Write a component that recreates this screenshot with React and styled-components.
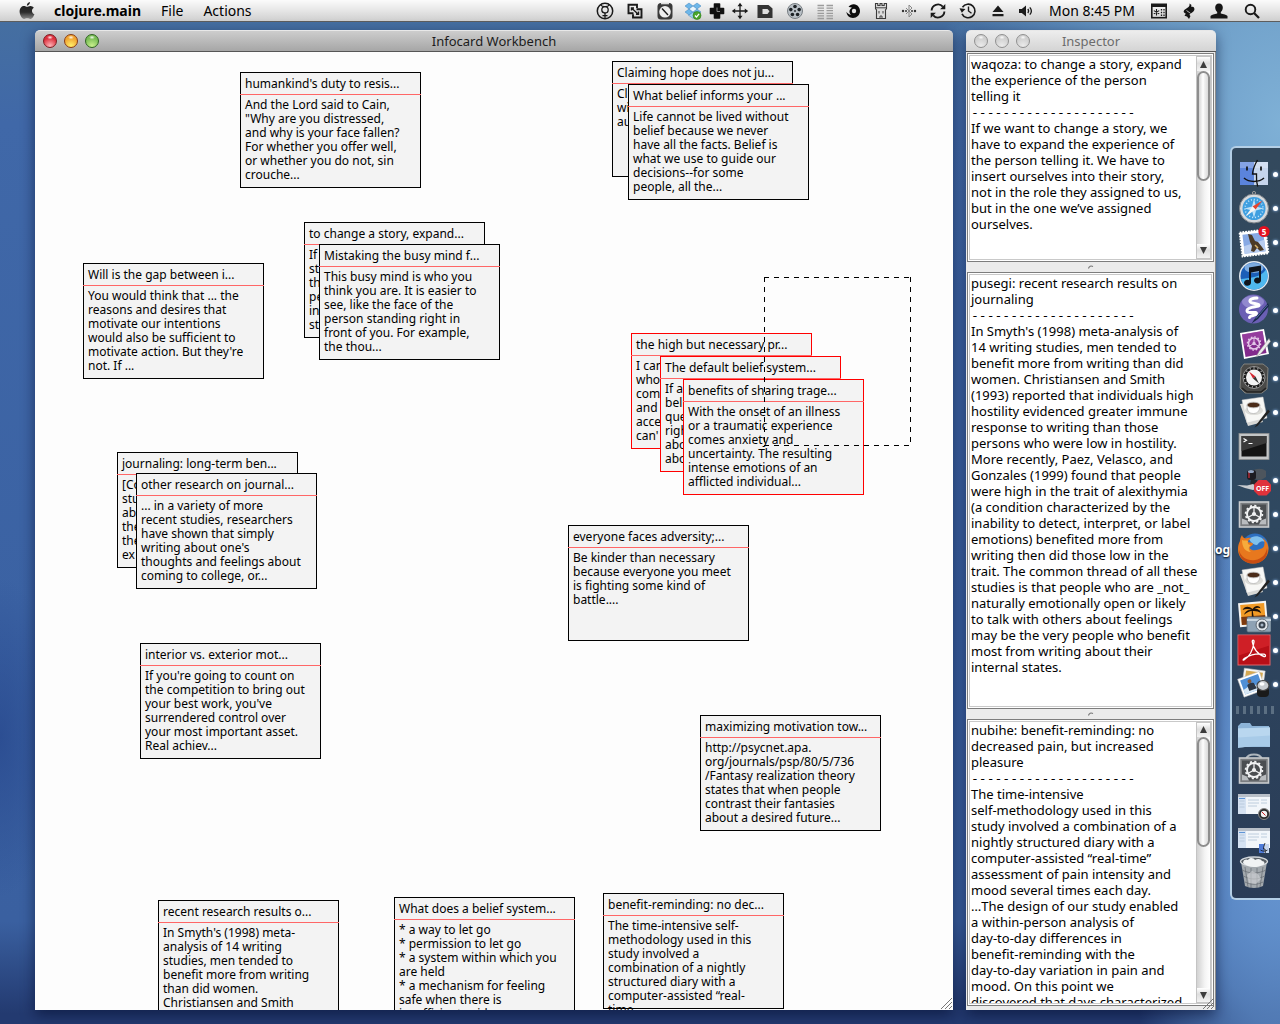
import React from "react";
import styled, { createGlobalStyle, css } from "styled-components";

const UI_FONT = '"Noto Sans", "Open Sans", "DejaVu Sans", sans-serif';

const GlobalStyle = createGlobalStyle`
  * { box-sizing: border-box; }
  body { margin: 0; font-family: ${UI_FONT}; color: #000; overflow: hidden; }
  button { font: inherit; color: inherit; margin: 0; padding: 0; border: 0; background: none; }
`;

/* ---------- shell ---------- */

const Screen = styled.div`
  display: flex;
  flex-direction: column;
  height: 100vh;
  background:
    radial-gradient(ellipse 340px 520px at 100% 12%, rgba(130, 180, 216, 0.95), rgba(110, 160, 205, 0.6) 60%, transparent),
    radial-gradient(ellipse 160px 460px at 100% 78%, rgba(108, 156, 214, 1), rgba(100, 148, 208, 0.7) 50%, transparent),
    radial-gradient(ellipse 60px 160px at 0 72%, rgba(38, 70, 140, 0.7), transparent),
    linear-gradient(to bottom, #46709f 0, #4068a8 12%, #3b62a3 60%, #3a60a0 90%, #233a70 99%);
`;

const Desktop = styled.main`
  flex: 1;
  min-height: 0;
  display: flex;
  padding: 8px 0 14px 35px;
`;

/* ---------- menu bar ---------- */

const MenuBar = styled.header`
  display: flex;
  align-items: center;
  height: 22px;
  padding: 0 10px 0 19px;
  background: linear-gradient(#fbfbfb, #e6e6e6 50%, #cfcfcf);
  border-bottom: 1px solid #5d5d5d;
  font-size: 14px;
  line-height: 20px;
`;

const Menus = styled.nav`
  display: flex;
  align-items: center;
`;

const MenuList = styled.div`
  display: flex;
  padding-left: 9px;
`;

const MenuButton = styled.button`
  padding: 0 10px;
  font-weight: ${(p) => (p.$bold ? 700 : 400)};
`;

const StatusItems = styled.div`
  display: flex;
  align-items: center;
  margin-left: auto;
`;

const StatusButton = styled.button`
  display: flex;
  justify-content: center;
  align-items: center;
  width: ${(p) => p.$w}px;
  height: 20px;
`;

/* ---------- windows ---------- */

const Window = styled.section`
  display: flex;
  flex-direction: column;
  border-radius: 5px 5px 0 0;
  box-shadow: 0 5px 14px rgba(0, 10, 40, 0.55);
  ${(p) =>
    p.$fill
      ? css`flex: 1; min-width: 0;`
      : css`flex: none; width: 250px; margin-left: 13px;`}
`;

const TitleBar = styled.header`
  display: grid;
  grid-template-columns: 80px 1fr 80px;
  align-items: center;
  flex: none;
  height: 22px;
  border-radius: 5px 5px 0 0;
  border-top: 1px solid #e8e8e8;
  border-bottom: 1px solid #565656;
  background: ${(p) => (p.$active ? "linear-gradient(#cdcdcd, #a6a6a6)" : "linear-gradient(#ededed, #d4d4d4)")};
  color: ${(p) => (p.$active ? "#1c1c1c" : "#6c6c6c")};
`;

const Title = styled.h1`
  margin: 0;
  text-align: center;
  font-size: 13px;
  line-height: 20px;
  font-weight: 400;
  white-space: nowrap;
`;

const Lights = styled.div`
  display: flex;
  gap: 7px;
  padding-left: 8px;
`;

const lightColors = {
  red: ["#ffb3b8", "#dc2f3c", "#7c1d22"],
  amber: ["#fff06a", "#f0a431", "#8a3c14"],
  green: ["#c9f08d", "#79bd55", "#2f6422"],
  off: ["#ebebeb", "#cfcfcf", "#909090"],
};

const Light = styled.button`
  width: 14px;
  height: 14px;
  border-radius: 50%;
  border: 1px solid ${(p) => lightColors[p.$tone][2]};
  background:
    radial-gradient(ellipse 3px 2px at 50% 20%, rgba(255, 255, 255, 0.9), transparent),
    radial-gradient(circle at 50% 90%, ${(p) => lightColors[p.$tone][0]}, ${(p) => lightColors[p.$tone][1]} 65%);
`;

const Canvas = styled.div`
  position: relative;
  flex: 1;
  min-height: 0;
  overflow: hidden;
  background: #fdfdfd;
`;

const Card = styled.article`
  position: absolute;
  left: ${(p) => p.$x}px;
  top: ${(p) => p.$y}px;
  width: 181px;
  height: 116px;
  border: 1px solid ${(p) => (p.$selected ? "#f00" : "#000")};
  background: #f3f3f3;
  font-size: 12px;
`;

const CardTitle = styled.h2`
  margin: 0;
  padding: 0 4px;
  font-size: 12px;
  line-height: 21px;
  font-weight: 400;
  white-space: nowrap;
`;

const CardRule = styled.hr`
  height: 1px;
  margin: 0 -1px;
  border: 0;
  background: #ff6666;
`;

const CardBody = styled.p`
  margin: 0;
  padding: 3px 4px;
  line-height: 14px;
  white-space: pre;
`;

const dash = (dir) => `repeating-linear-gradient(to ${dir}, #000 0 5px, transparent 5px 10px)`;

const Marquee = styled.div`
  position: absolute;
  left: 729px;
  top: 225px;
  width: 147px;
  height: 169px;
  background:
    ${dash("right")} top / 100% 1px no-repeat,
    ${dash("right")} bottom / 100% 1px no-repeat,
    ${dash("bottom")} left / 1px 100% no-repeat,
    ${dash("bottom")} right / 1px 100% no-repeat;
`;

const Grip = styled.svg`
  position: absolute;
  right: 1px;
  bottom: 1px;
`;

/* ---------- inspector ---------- */

const Panes = styled.div`
  position: relative;
  flex: 1;
  min-height: 0;
  display: flex;
  flex-direction: column;
  padding: 1px 1px 4px;
  background: #ebebeb;
  border-right: 1px solid #8c8c8c;
`;

const Pane = styled.div`
  flex: ${(p) => p.$grow} 1 0;
  min-height: 0;
  display: flex;
  border: 1px solid #7d7d7d;
  outline: 1px solid #c9c9c9;
  outline-offset: -3px;
  background: #fff;
`;

const PaneText = styled.div`
  flex: 1;
  min-width: 0;
  overflow: hidden;
  margin: 2px 0;
  padding: 0 3px;
  font-size: 13px;
  line-height: 16px;
  white-space: pre;
`;

const Separator = styled.span`
  font-family: "DejaVu Sans Mono", monospace;
  line-height: 14px;
`;

const Splitter = styled.div`
  flex: none;
  display: flex;
  align-items: center;
  justify-content: center;
  height: 10px;
`;

const ScrollBar = styled.div`
  flex: none;
  display: flex;
  flex-direction: column;
  width: 15px;
  margin: 2px;
  border: 1px solid #c4c4c4;
  background: linear-gradient(to right, #d2d2d2, #f4f4f4 60%, #fff);
`;

const ScrollButton = styled.button`
  display: flex;
  align-items: center;
  justify-content: center;
  flex: none;
  height: 14px;
  background: linear-gradient(#fff, #dedede 45%, #f3f3f3);
`;

const Track = styled.div`
  flex: 1;
  min-height: 0;
`;

const Thumb = styled.div`
  width: 13px;
  height: 110px;
  border: 2px solid #8e8e8e;
  border-radius: 7px;
  background: linear-gradient(to right, #d5d5d5, #fff 45%, #f1f1f1 60%, #dadada);
`;

/* ---------- dock ---------- */

const Margin = styled.div`
  position: relative;
  flex: none;
  width: 14px;
`;

const DesktopLabel = styled.span`
  position: absolute;
  right: 0;
  top: 512px;
  font-size: 12px;
  line-height: 16px;
  font-weight: 700;
  color: #fff;
  text-shadow: 0 1px 2px #000;
`;

const Dock = styled.aside`
  flex: none;
  align-self: center;
  display: flex;
  flex-direction: column;
  width: 50px;
  margin-top: 6px;
  padding: 9px 0;
  border: 2px solid #b4cfe6;
  border-right: 0;
  border-radius: 6px 0 0 6px;
  background: linear-gradient(#33495d, #2f4860 50%, #2a3c57);
`;

const DockButton = styled.button`
  display: flex;
  align-items: center;
  gap: 2px;
  height: 34px;
  padding-left: 5px;
`;

const RunningDot = styled.span`
  width: 5px;
  height: 5px;
  border-radius: 50%;
  background: #fff;
  box-shadow: 0 0 3px #9cc8ff;
`;

const DockSeparator = styled.div`
  flex: none;
  height: 18px;
  display: flex;
  align-items: center;
  gap: 4px;
  padding-left: 4px;
`;

const Tick = styled.span`
  width: 3px;
  height: 8px;
  background: #5b6f82;
`;

/* ---------- status icons, 20x20 ---------- */

const S = ({ children }) => (
  <svg width="20" height="20" viewBox="0 0 20 20" fill="none" stroke="#1a1a1a" strokeWidth="1.6" aria-hidden="true">
    {children}
  </svg>
);

const statusIcons = [
  ["Mercury", 30, <S><circle cx="10" cy="10" r="7.700" strokeWidth="1.500" /><circle cx="10" cy="8.800" r="3.200" strokeWidth="1.300" /><path d="M5.800 4c.8 1.300 2.300 1.600 4.200 1.600S13.400 5.300 14.200 4M10 12v5.500M7.500 14.600h5" strokeWidth="1.300" /></S>],
  ["Windows", 30, <S><path d="M8.500 12.200h-5V3.800h8.500v3.200" strokeWidth="1.900" /><path d="M11.500 8.200h5v8.300H8v-3.300" strokeWidth="1.900" /><path d="M6.500 9.500V7h2.500M7 7.500l6 5.500M13.500 10.500V13.300H11" strokeWidth="1.400" /></S>],
  ["Timer", 30, <S><rect x="2.500" y="2" width="15" height="16.500" rx="3.500" fill="#3a3a3a" stroke="none" /><circle cx="10" cy="10.800" r="5.800" fill="#eee" stroke="none" /><path d="M7 7.600l6 6.400" strokeWidth="1.400" /><path d="M6 2.500h8" stroke="#ddd" /></S>],
  ["Dropbox", 25, <S><g stroke="#3d82bd" strokeWidth=".5" fill="#6db7ea"><path d="M6 2l4 3-4 3-4-3zM14 2l4 3-4 3-4-3zM6 8l4 3-4 3-4-3zM14 8l4 3-4 3-4-3z" /><path d="M10 5l4 3-4 3-4-3z" fill="#e8f5fd" /><path d="M5.500 14.300l4.500-3 4.500 3-4.500 3z" fill="#9dd2f3" /></g><circle cx="14" cy="14.500" r="4" fill="#4aa52c" stroke="#2e7d18" strokeWidth=".6" /><path d="M12 14.500l1.500 1.600 2.600-3.200" stroke="#fff" strokeWidth="1.300" /></S>],
  ["Caffeine", 24, <S><path d="M7.500 3h5v4.500h4v5h-4V17h-5v-4.500h-4v-5h4z" fill="#111" stroke="#111" strokeLinejoin="round" /><path d="M10 6.500v4h3" stroke="#888" strokeWidth="1" /></S>],
  ["Spaces", 22, <S><path d="M10 3v14M3 10h14" strokeWidth="1.300" /><path d="M10 1.800l2.500 3.400h-5zM10 18.200l2.500-3.400h-5zM1.800 10l3.400-2.500v5zM18.200 10l-3.400-2.500v5z" fill="#1a1a1a" stroke="none" /></S>],
  ["DEVONthink", 28, <S><path d="M2.500 4h11l4 3.500V17h-15z" fill="#333" stroke="none" /><path d="M7.500 8h5l2 2.300-2 2.700h-5z" fill="#ddd" stroke="none" /></S>],
  ["Film", 31, <S><circle cx="10" cy="10" r="7.500" fill="#b9c0c6" stroke="#777d82" strokeWidth="1" /><g fill="#1d2226" stroke="none"><circle cx="10" cy="5.500" r="1.800" /><circle cx="14.200" cy="8.600" r="1.800" /><circle cx="12.600" cy="13.500" r="1.800" /><circle cx="7.400" cy="13.500" r="1.800" /><circle cx="5.800" cy="8.600" r="1.800" /><circle cx="10" cy="10" r=".9" /></g></S>],
  ["Monitor", 29, <S><path d="M2.500 4.500h6.500M2.500 7.100h6.500M2.500 9.700h6.500M2.500 12.300h6.500M2.500 14.900h6.500M2.500 17.500h6.500M11.500 4.500H18M11.500 7.100H18M11.500 9.700H18M11.500 12.300H18M11.500 14.900H18M11.500 17.500H18" stroke="#9c9c9c" strokeWidth="1.300" /></S>],
  ["Swirl", 27, <S><path d="M5.500 6C7 3.800 9 3 11 3.200c3.500.3 6 3.300 6 6.800 0 4-3.200 7-7 7-3.600 0-6.500-2.600-6.500-6.200 1 1.700 2.500 2.900 4.500 3-1.500-1.200-2-3-1.200-4.700C7.600 7.500 9 6.800 9 6.800 7.800 6.200 6.600 5.900 5.500 6z" fill="#0c0c0c" stroke="none" /><circle cx="11" cy="10" r="2.200" fill="#e4e4e4" stroke="none" /></S>],
  ["Rook", 29, <S><path d="M5.500 17.500V9L4.500 7.500v-5h2.300V4.500h2.200v-2h2v2h2.200v-2h2.300v5L14.500 9v8.500z" fill="#dcdcdc" stroke="#3a3a3a" strokeWidth="1.100" /><path d="M4.500 6.800h11M8 10v2.500M12 10v2.500M9 17.500v-2.500h2v2.500" stroke="#444" strokeWidth="1" /></S>],
  ["Bluetooth", 28, <S><g stroke="#888" strokeWidth="1"><path d="M7 7l6 6-3 3V4l3 3-6 6" /></g><g fill="#333" stroke="none"><circle cx="4" cy="10" r="1.200" /><circle cx="7" cy="10" r="1" /><circle cx="13" cy="10" r="1" /><circle cx="16" cy="10" r="1.200" /></g></S>],
  ["Sync", 29, <S><path d="M3.600 9.500A6.400 6.400 0 0 1 14.800 5.600M16.400 10.500A6.400 6.400 0 0 1 5.200 14.400" strokeWidth="1.900" /><path d="M17.300 3v5.200h-5.200zM2.700 17v-5.200h5.200z" fill="#1a1a1a" stroke="none" /></S>],
  ["Time Machine", 31, <S><path d="M4.500 6.200A6.800 6.800 0 1 1 4 12.800" strokeWidth="1.600" /><path d="M1.500 7.200l6 .8-3.700 3.800z" fill="#1a1a1a" stroke="none" /><path d="M10.500 5.500V10l3 2.200" strokeWidth="1.400" /></S>],
  ["Eject", 29, <S><path d="M10 4.500l5.500 6.500h-11zM4.500 13h11v2.300h-11z" fill="#1a1a1a" stroke="none" /></S>],
  ["Volume", 28, <S><path d="M3 8h2.800L10 4.500v11L5.800 12H3z" fill="#1a1a1a" stroke="none" /><path d="M11.800 8c1 1.200 1 2.800 0 4M13.800 6.300c1.900 2.200 1.900 5.200 0 7.400" strokeWidth="1.300" /></S>],
];

const sessionIcons = [
  ["Input menu", 30, <S><rect x="2.800" y="3.300" width="14.400" height="13.400" strokeWidth="1.600" /><path d="M2.800 5h14.400" strokeWidth="2" /><path d="M7.500 8v6.500M4.800 9.600l5.400 3.200M10.200 9.600l-5.400 3.200" strokeWidth="1.100" /><path d="M12.500 8v7M15 8v7" strokeDasharray="1.500 1.200" strokeWidth="1.300" /></S>],
  ["Scripts", 30, <S><path d="M10.500 2.500l2 1.500-.5 1.500 2.500.5c1.800 2 .8 4-1 5.200l-2.500 1.800c-.8.700-.3 1.500.5 2l-1.500 3-2-2.500-2.500-.8 1.300-2L5 11.500c-.8-1 0-2.300 1-3L9.500 6c1-.8 1.200-1.800 1-3.500z" fill="#151515" stroke="none" /><path d="M7.500 9.500l4 2.800" stroke="#ddd" strokeWidth=".8" /></S>],
  ["User", 30, <S><path d="M10 2.500c2.600 0 3.800 1.800 3.800 4 0 2-1 3.600-2 4.500v1.500c2.500.8 6 1.200 6.700 2.500v2.500h-17V15c.7-1.300 4.200-1.700 6.700-2.500V11c-1-.9-2-2.500-2-4.500 0-2.200 1.200-4 3.800-4z" fill="#151515" stroke="none" /></S>],
  ["Spotlight", 36, <S><circle cx="8.500" cy="8.500" r="4.800" strokeWidth="1.900" /><path d="M12 12l5 5" strokeWidth="2.300" /></S>],
];

const AppleLogo = () => (
  <svg width="16" height="18" viewBox="0 0 16 18" aria-hidden="true">
    <defs>
      <linearGradient id="apple" x1="0" y1="0" x2="0" y2="1">
        <stop offset="0" stopColor="#1c1c1c" />
        <stop offset=".6" stopColor="#2c2c2c" />
        <stop offset="1" stopColor="#8c8c8c" />
      </linearGradient>
    </defs>
    <path fill="url(#apple)" d="M10.900 0c.2 1.500-1 3.500-3 3.700C7.600 2.100 9.300.3 10.900 0zM8 4.800c.9 0 1.800-.9 3.400-.9 1.400 0 2.700.7 3.400 1.800-2.700 1.700-2.300 5.300.6 6.500-.7 2-2.300 4.800-4 4.800-1.200 0-1.700-.7-3.200-.7s-2 .7-3.100.7C3 17 .6 12.900.6 9.500c0-3.500 2.200-5.500 4.400-5.500 1.400 0 2.300.8 3 .8z" />
  </svg>
);

/* ---------- dock icons, 34x34 ---------- */

const D = ({ children }) => (
  <svg width="34" height="34" viewBox="0 0 34 34" aria-hidden="true">
    {children}
  </svg>
);

const Gear = ({ cx, cy, r, fill }) => (
  <g transform={`translate(${cx} ${cy})`} fill="none">
    <circle r={r} stroke={fill} strokeWidth={r * 0.28} />
    <circle r={r * 1.2} stroke={fill} strokeWidth={r * 0.24} strokeDasharray={`${r * 0.3} ${r * 0.328}`} />
    <circle r={r * 0.3} fill={fill} />
    <path d={`M0 0V${-r}M0 0L${r * 0.87} ${r * 0.5}M0 0L${-r * 0.87} ${r * 0.5}`} stroke={fill} strokeWidth={r * 0.18} />
  </g>
);

const Prefs = () => (
  <>
    <rect x="2.500" y="5" width="29" height="25" fill="#7a7d80" stroke="#c9cbcd" strokeWidth="1.600" />
    <rect x="5" y="7.500" width="24" height="20" fill="#4b4e51" />
    <path d="M5 27.500v-6l5 2 2 4zM29 27.500v-6l-5 2-2 4z" fill="#b9bcbf" />
    <Gear cx={17} cy={17} r={7} fill="#f2f3f4" />
  </>
);

const Coffee = () => (
  <>
    <path d="M3 9l15-2 8 20-15 4z" fill="#d9d9d6" />
    <path d="M5 5l21-3 4 21-20 5z" fill="#f7f7f5" stroke="#ccc" strokeWidth=".5" />
    <ellipse cx="17" cy="15.500" rx="9" ry="4.500" fill="#dcdcd8" />
    <path d="M10 10c0 6 2 8.500 6.500 8.500S23 15 23 10z" fill="#fff" stroke="#aaa" strokeWidth=".6" />
    <ellipse cx="16.500" cy="10" rx="6.500" ry="2.800" fill="#4a2b18" stroke="#bbb" strokeWidth=".8" />
    <path d="M31 14.500L19.500 29.500l-2 3 3.200-1.700L33 16.500z" fill="#222" />
  </>
);

const WindowThumb = () => (
  <>
    <rect x="1" y="7" width="32" height="20" fill="#f2f6fa" />
    <path d="M1 8.500h32" stroke="#b8bfc8" strokeWidth="3" />
    <rect x="1" y="10" width="8" height="17" fill="#d5e2f2" />
    <path d="M2.500 14h5M2.500 17h5M2.500 20h5M11 13h11M11 16h11M11 19h9M24 13h6M24 16h6" stroke="#b7c8da" strokeWidth=".9" />
    <path d="M2 11.500h6" stroke="#5f95d6" strokeWidth="1" />
  </>
);

const dockApps = [
  ["Finder", true, (
    <D>
      <rect x="3" y="5" width="14" height="23" fill="#5b84dc" /><rect x="17" y="5" width="14" height="23" fill="#c6d5ec" />
      <rect x="3" y="5" width="28" height="6" fill="#fff" opacity=".25" />
      <path d="M20.500 3c-3 5-4.500 9-5 14h4c-.3 5 0 8.500 1.200 12.500" fill="none" stroke="#111" strokeWidth="1.300" />
      <path d="M7 21c5 4.500 15 4.500 20 0" fill="none" stroke="#111" strokeWidth="1.500" />
      <path d="M10 9.500v4M24 9.500v4" stroke="#111" strokeWidth="1.700" />
    </D>
  )],
  ["Safari", true, (
    <D>
      <circle cx="17" cy="17.500" r="14.500" fill="#d7dadd" /><circle cx="17" cy="17.500" r="14.500" fill="none" stroke="#7d8287" strokeWidth="1" />
      <circle cx="17" cy="17.500" r="11.500" fill="#3f9fe0" /><circle cx="17" cy="17.500" r="9" fill="none" stroke="#c5e6fb" strokeWidth="1.500" strokeDasharray="1 2" />
      <path d="M17 8l2 7.500 7.500 2-7.500 2L17 27l-2-7.500-7.500-2 7.500-2z" fill="#bfe2f8" />
      <path d="M25.500 9.500l-7 9-3-3z" fill="#e8442c" /><path d="M8.500 25.500l7-10 3 3z" fill="#f5f5f5" />
      <circle cx="17" cy="2" r="1.600" fill="none" stroke="#999" />
    </D>
  )],
  ["Mail", true, (
    <D>
      <g transform="rotate(-7 17 18)"><rect x="4" y="6" width="26" height="24" fill="#fff" stroke="#fff" strokeWidth="2" strokeDasharray="1.800 1" />
        <rect x="6.500" y="8.500" width="21" height="19" fill="#87a9e4" /><path d="M6.500 20l21-4v11.500h-21z" fill="#b8cdf0" /></g>
      <path d="M11 9l4 1 3 6 3 1 4 5 2 3-4 1-3-3-3 4-3-1 1-5-2-4z" fill="#4b3a26" /><path d="M18 20l3 3" stroke="#d9b36a" strokeWidth="1.500" />
      <circle cx="27" cy="6.500" r="5.600" fill="#e3101f" />
      <text x="27" y="9.500" fontSize="8" fontWeight="700" textAnchor="middle" fill="#fff" fontFamily="Noto Sans, sans-serif">5</text>
    </D>
  )],
  ["iTunes", false, (
    <D>
      <circle cx="17" cy="17" r="15" fill="#e2e8ee" /><circle cx="17" cy="17" r="13.500" fill="#1b5fb8" />
      <path d="M17 30.500a13.500 13.500 0 0 0 12-20C24 19 11 19 4 20c1.500 6.500 7 10.500 13 10.500z" fill="#4fb8ef" />
      <ellipse cx="17" cy="9" rx="9.500" ry="5" fill="#a7cdf2" opacity=".7" />
      <path d="M12 8.500l12-2v15a3.500 3 0 1 1-2-2.700V12l-8 1.500v10.300a3.500 3 0 1 1-2-2.700z" fill="#10151c" />
    </D>
  )],
  ["Emacs", true, (
    <D>
      <circle cx="16.500" cy="16" r="14.500" fill="#6a5fb4" /><ellipse cx="16" cy="9" rx="11" ry="6.500" fill="#a39bd8" opacity=".7" />
      <path d="M20 5c-4 0-7.500 1-7 3.500S21 10 22 12s-12 1.500-12 5.500 10 .5 9.500 3S13 22 12.500 24.500" fill="none" stroke="#fff" strokeWidth="3" strokeLinecap="round" />
      <path d="M31 10L19 24l-4.500 6.500L21 26 32 13z" fill="#18284a" /><path d="M30.500 12L19 25.500" stroke="#5f82b8" strokeWidth=".8" />
    </D>
  )],
  ["Omni", true, (
    <D>
      <path d="M3 6l24-4 5 25-25 5z" fill="#fff" /><path d="M5 7.500l20.500-3.500 4 22-21 4z" fill="#822a8c" />
      <path d="M5 7.500l20.500-3.500 1.600 9-20 6z" fill="#a04aa8" opacity=".6" />
      <Gear cx={17} cy={16.500} r={5.500} fill="#e3c6e8" /><path d="M32 11.500l-10 13-3 5.500 5-3.500 9.500-12z" fill="#ececec" stroke="#888" strokeWidth=".5" />
    </D>
  )],
  ["Compass", true, (
    <D>
      <path d="M7 3h19l5 4-1 21-5 4H8l-5-5 1-20z" fill="#4a4a48" stroke="#82827e" strokeWidth="1" />
      <circle cx="17" cy="16.500" r="11" fill="#1b1b1b" stroke="#999" strokeWidth="1" /><circle cx="17" cy="16.500" r="8" fill="#f4f4f4" />
      <circle cx="17" cy="16.500" r="9.500" fill="none" stroke="#ddd" strokeWidth="1.300" strokeDasharray="1 3" />
      <path d="M12 10.500l6.500 5-2.500 2z" fill="#d3252f" /><path d="M22 22.500l-6-5 2.500-2z" fill="#333" /><path d="M5 27l5 4h14l5-4" fill="none" stroke="#222" strokeWidth="1.500" />
    </D>
  )],
  ["Bean", true, <D><Coffee /></D>],
  ["Terminal", false, (
    <D>
      <rect x="2" y="4.500" width="30" height="26" fill="#c3c5c6" stroke="#8d8f90" strokeWidth=".8" /><rect x="4.500" y="7" width="25" height="20.500" fill="#141414" />
      <path d="M4.500 7h25v7l-25 8z" fill="#3a3a3a" /><path d="M6.500 9.500l3 1.800-3 1.800M11.500 14.500h4" stroke="#fff" strokeWidth="1.200" fill="none" />
    </D>
  )],
  ["Coffee off", true, (
    <D>
      <path d="M15 8c5-3 10-3 14 0v6l-5 3-9-1z" fill="#4d555d" /><rect x="10" y="7" width="9" height="10" rx="3" fill="#1c1c22" /><path d="M12 8v7" stroke="#8a2530" strokeWidth="2" />
      <ellipse cx="14" cy="8.500" rx="3" ry="1.500" fill="#93a6c4" />
      <path d="M14 17h6l1 5h-8z" fill="#24282d" /><path d="M0 22l10 .5 6-1.500 6 4-6 2-8-2z" fill="#c9ccd0" />
      <path d="M21.500 17h8l4.500 4.500v6.500l-4.500 4.500h-8L17 28v-6.500z" fill="#e0333b" />
      <text x="25.500" y="28" fontSize="7" fontWeight="700" textAnchor="middle" fill="#fff" fontFamily="Noto Sans, sans-serif">OFF</text>
    </D>
  )],
  ["System Preferences", true, <D><Prefs /></D>],
  ["Firefox", true, (
    <D>
      <circle cx="18" cy="16" r="13.500" fill="#2d6fc0" /><path d="M12 8c5-5 14-3 16 3-3-2-6 0-7 2s-6 1-9-5z" fill="#7fc0ec" />
      <path d="M3 10c0-3 1.500-5 2-6 .5 2 1.500 3 3.500 3.500 2-.8 4-1 5.500-.3-2 1-3 2.300-3 4 2 .3 5 .3 5 1.800-.5 2-3 2-3.500 4 2 3 6 2.500 9 1.500 3-1 6-1 6-6.500 0-2-1-4-2-5 3.500 2 6 6.500 6 10.500 0 8-6 15-15.500 15C7 32.500 1 26 1 18.500 1 15 1.500 12.500 3 10z" fill="#e8781e" />
      <path d="M2 19c2 8 9 11 16 10 7-1 11-6 12-12 2 8-4 15.500-13.500 15.500C7 32.500 1.500 26 2 19z" fill="#c94d12" />
      <path d="M5 9c2 1 4 0 6 1-1 3 1 4 3 4-3 2-3 5 0 7-6 0-9-5-9-12z" fill="#f6ab3c" />
    </D>
  )],
  ["Bean document", true, <D><Coffee /></D>],
  ["iPhoto", true, (
    <D>
      <g transform="rotate(-5 16 15)"><rect x="2" y="3" width="28" height="24" fill="#f4f4f2" /><rect x="4" y="5" width="24" height="20" fill="#f09a26" /><path d="M4 17h24v8H4z" fill="#7d3a10" />
        <path d="M16 10c-4-4-8-3-10 0 3-1 6-1 9 1-4-1-7 1-8 4 3-2 6-3 8-3l-1 13h3l-1-13c3 0 6 1 8 3 0-3-3-5-6-5 2-1 4-1 6 0-1-3-5-4-8 0z" fill="#1d1108" /></g>
      <rect x="10" y="18" width="24" height="15" rx="1.500" fill="#8ea2b4" stroke="#5d6c7a" strokeWidth=".8" /><path d="M10 21h24" stroke="#c7d4de" strokeWidth="2" />
      <circle cx="25" cy="26" r="6" fill="#dfe5ea" stroke="#5f6a74" /><circle cx="25" cy="26" r="3.500" fill="#38434e" /><circle cx="25" cy="26" r="1.500" fill="#a6b6c6" />
    </D>
  )],
  ["Adobe Reader", true, (
    <D>
      <rect x="1" y="2" width="32" height="30" fill="#b80f17" stroke="#e06468" strokeWidth="1" /><path d="M1.500 2.500h31v10l-31 10z" fill="#d8262d" opacity=".7" />
      <path d="M7 27c5-3 9-10 10-18 .3-2.500-2-2.500-1.700 0C16 15 21 22 27 23.500c2 .3 2-1.800 0-2.300-6-1-14 .8-19 3.800-2 1.500-2.500 2.500-1 2z" fill="none" stroke="#fff" strokeWidth="1.300" />
    </D>
  )],
  ["Preview", true, (
    <D>
      <g transform="rotate(8 20 12)"><rect x="6" y="3" width="21" height="18" fill="#f4f4f4" stroke="#ccc" strokeWidth=".5" /><path d="M8 5h17v8H8z" fill="#d4a852" /></g>
      <g transform="rotate(-20 14 17)"><rect x="3" y="8" width="23" height="19" fill="#fff" stroke="#bbb" strokeWidth=".5" /><rect x="5" y="10" width="19" height="15" fill="#4f8fd6" /><path d="M5 20l8-2 11 3v4H5z" fill="#d7e7f5" /><circle cx="13.500" cy="14" r="2" fill="#8a5a3a" /><path d="M10 17c2-1.500 5-1.500 7 0l1 6h-8z" fill="#2c3644" /></g>
      <rect x="20" y="20" width="12" height="10" rx="4" fill="#1a1a1a" /><ellipse cx="26" cy="18.500" rx="6" ry="5" fill="#c8ccd0" stroke="#444" strokeWidth="1.200" /><ellipse cx="25" cy="17" rx="2.500" ry="1.800" fill="#fff" />
    </D>
  )],
];

const dockStacks = [
  ["Folder", (
    <D>
      <path d="M1 7l3-3h9l2 3h17v21H1z" fill="#8db4d8" /><path d="M1 9.500l32-1V28c-8-1-24-.5-32 1z" fill="#a8cbe8" /><path d="M1 9.500l32-1v8l-32 2z" fill="#b9d7ef" />
    </D>
  )],
  ["Utilities", <D><path d="M9 6c2-6 14-6 16 0" fill="none" stroke="#aeb6bd" strokeWidth="2" /><Prefs /></D>],
  ["Minimized inspector", (
    <D><WindowThumb /><circle cx="27" cy="27" r="5.500" fill="#2b2b2b" stroke="#888" strokeWidth="1" /><circle cx="27" cy="27" r="3.200" fill="#f2f2f2" /><path d="M25 25l3.500 3.500" stroke="#c22" strokeWidth="1" /></D>
  )],
  ["Minimized Finder window", (
    <D><WindowThumb /><rect x="22" y="23" width="5" height="9" fill="#4f7bd8" /><rect x="27" y="23" width="5" height="9" fill="#c6d5ec" /><path d="M28 22c-1 3-1.500 4-1.500 6H28l.3 4M23.500 29c2 1.500 5 1.500 7 0" fill="none" stroke="#111" strokeWidth=".8" /></D>
  )],
  ["Trash", (
    <D>
      <path d="M4 7l4 24c5 2.500 13 2.500 18 0l4-24z" fill="#a3a9ae" /><path d="M8 12l3 20M14 13v20M20 13v20M26 12l-3 20M5 15c8 4 16 4 24 0M6.500 21c7 4 14 4 21 0M8 27c6 3 12 3 18 0" stroke="#656c72" strokeWidth=".7" fill="none" />
      <path d="M10 20l5-4 6 3 3 5-5 5-7-1z" fill="#d3d6d8" opacity=".6" />
      <ellipse cx="17" cy="6.500" rx="13.500" ry="4.500" fill="#5b6268" stroke="#d3d8dc" strokeWidth="1.300" />
      <path d="M6 8c0-4 4-4 5-3 2-3 6-2 7 0 3-2 6-1 7 1 3 0 3 3 1 4-6 3-15 3-20-2z" fill="#f1f3f4" />
    </D>
  )],
];

/* ---------- content ---------- */

const cards = [
  { x: 205, y: 20, title: "humankind's duty to resis...", body: "And the Lord said to Cain,\n\"Why are you distressed,\nand why is your face fallen?\nFor whether you offer well,\nor whether you do not, sin\ncrouche..." },
  { x: 577, y: 9, title: "Claiming hope does not ju...", body: "Cl\nwi\nau" },
  { x: 593, y: 32, title: "What belief informs your ...", body: "Life cannot be lived without\nbelief because we never\nhave all the facts. Belief is\nwhat we use to guide our\ndecisions--for some\npeople, all the..." },
  { x: 269, y: 170, title: "to change a story, expand...", body: "If\nst\nth\npe\nin\nst" },
  { x: 284, y: 192, title: "Mistaking the busy mind f...", body: "This busy mind is who you\nthink you are. It is easier to\nsee, like the face of the\nperson standing right in\nfront of you. For example,\nthe thou..." },
  { x: 48, y: 211, title: "Will is the gap between i...", body: "You would think that ... the\nreasons and desires that\nmotivate our intentions\nwould also be sufficient to\nmotivate action. But they're\nnot. If ..." },
  { x: 596, y: 281, selected: true, title: "the high but necessary pr...", body: "I can\nwho\ncom\nand\nacce\ncan'" },
  { x: 625, y: 304, selected: true, title: "The default belief system...", body: "If a\nbeli\nque\nrigh\nabo\nabo" },
  { x: 648, y: 327, selected: true, title: "benefits of sharing trage...", body: "With the onset of an illness\nor a traumatic experience\ncomes anxiety and\nuncertainty. The resulting\nintense emotions of an\nafflicted individual..." },
  { x: 82, y: 400, title: "journaling: long-term ben...", body: "[Co\nstu\nabo\nthe\nthe\nex" },
  { x: 101, y: 421, title: "other research on journal...", body: "... in a variety of more\nrecent studies, researchers\nhave shown that simply\nwriting about one's\nthoughts and feelings about\ncoming to college, or..." },
  { x: 533, y: 473, title: "everyone faces adversity;...", body: "Be kinder than necessary\nbecause everyone you meet\nis fighting some kind of\nbattle...." },
  { x: 105, y: 591, title: "interior vs. exterior mot...", body: "If you're going to count on\nthe competition to bring out\nyour best work, you've\nsurrendered control over\nyour most important asset.\nReal achiev..." },
  { x: 665, y: 663, title: "maximizing motivation tow...", body: "http://psycnet.apa.\norg/journals/psp/80/5/736\n/Fantasy realization theory\nstates that when people\ncontrast their fantasies\nabout a desired future..." },
  { x: 123, y: 848, title: "recent research results o...", body: "In Smyth's (1998) meta-\nanalysis of 14 writing\nstudies, men tended to\nbenefit more from writing\nthan did women.\nChristiansen and Smith" },
  { x: 359, y: 845, title: "What does a belief system...", body: "* a way to let go\n* permission to let go\n* a system within which you\nare held\n* a mechanism for feeling\nsafe when there is\ninsufficient evidence" },
  { x: 568, y: 841, title: "benefit-reminding: no dec...", body: "The time-intensive self-\nmethodology used in this\nstudy involved a\ncombination of a nightly\nstructured diary with a\ncomputer-assisted “real-\ntime..." },
];

const notes = [
  {
    grow: 208,
    scroll: true,
    heading: "waqoza: to change a story, expand\nthe experience of the person\ntelling it",
    text: "If we want to change a story, we\nhave to expand the experience of\nthe person telling it. We have to\ninsert ourselves into their story,\nnot in the role they assigned to us,\nbut in the one we’ve assigned\nourselves.",
  },
  {
    grow: 438,
    heading: "pusegi: recent research results on\njournaling",
    text: "In Smyth's (1998) meta-analysis of\n14 writing studies, men tended to\nbenefit more from writing than did\nwomen. Christiansen and Smith\n(1993) reported that individuals high\nhostility evidenced greater immune\nresponse to writing than those\npersons who were low in hostility.\nMore recently, Paez, Velasco, and\nGonzales (1999) found that people\nwere high in the trait of alexithymia\n(a condition characterized by the\ninability to detect, interpret, or label\nemotions) benefited more from\nwriting then did those low in the\ntrait. The common thread of all these\nstudies is that people who are _not_\nnaturally emotionally open or likely\nto talk with others about feelings\nmay be the very people who benefit\nmost from writing about their\ninternal states.",
  },
  {
    grow: 287,
    scroll: true,
    heading: "nubihe: benefit-reminding: no\ndecreased pain, but increased\npleasure",
    text: "The time-intensive\nself-methodology used in this\nstudy involved a combination of a\nnightly structured diary with a\ncomputer-assisted “real-time”\nassessment of pain intensity and\nmood several times each day.\n…The design of our study enabled\na within-person analysis of\nday-to-day differences in\nbenefit-reminding with the\nday-to-day variation in pain and\nmood. On this point we\ndiscovered that days characterized",
  },
];

const StatusIcon = ({ item: [label, width, icon] }) => (
  <StatusButton $w={width} aria-label={label}>{icon}</StatusButton>
);

const DockItem = ({ label, running, children }) => (
  <DockButton aria-label={label}>
    {children}
    {running && <RunningDot />}
  </DockButton>
);

const Arrow = ({ up }) => (
  <svg width="7" height="7" viewBox="0 0 7 7" aria-hidden="true">
    <path d={up ? "M3.500 0L7 7H0z" : "M3.500 7L0 0h7z"} fill="#3c3c3c" />
  </svg>
);

const NotePane = ({ note }) => (
  <Pane $grow={note.grow}>
    <PaneText>
      {note.heading}
      {"\n"}
      <Separator>---------------------</Separator>
      {"\n"}
      {note.text}
    </PaneText>
    {note.scroll && (
      <ScrollBar>
        <ScrollButton aria-label="Scroll up"><Arrow up /></ScrollButton>
        <Track><Thumb /></Track>
        <ScrollButton aria-label="Scroll down"><Arrow /></ScrollButton>
      </ScrollBar>
    )}
  </Pane>
);

const ResizeGrip = () => (
  <Grip width="12" height="12" viewBox="0 0 12 12" aria-hidden="true">
    <path d="M1 12L12 1M5 12l7-7M9 12l3-3" stroke="#777" strokeWidth="1" />
  </Grip>
);

export default function App() {
  return (
    <Screen>
      <GlobalStyle />
      <MenuBar>
        <Menus>
          <AppleLogo />
          <MenuList>
            <MenuButton $bold>clojure.main</MenuButton>
            <MenuButton>File</MenuButton>
            <MenuButton>Actions</MenuButton>
          </MenuList>
        </Menus>
        <StatusItems>
          {statusIcons.map((item) => <StatusIcon key={item[0]} item={item} />)}
          <StatusButton $w={104}>Mon 8:45 PM</StatusButton>
          {sessionIcons.map((item) => <StatusIcon key={item[0]} item={item} />)}
        </StatusItems>
      </MenuBar>

      <Desktop>
        <Window $fill>
          <TitleBar $active>
            <Lights>
              <Light $tone="red" aria-label="Close" />
              <Light $tone="amber" aria-label="Minimize" />
              <Light $tone="green" aria-label="Zoom" />
            </Lights>
            <Title>Infocard Workbench</Title>
          </TitleBar>
          <Canvas>
            {cards.map((card) => (
              <Card key={card.title} $x={card.x} $y={card.y} $selected={card.selected}>
                <CardTitle>{card.title}</CardTitle>
                <CardRule />
                <CardBody>{card.body}</CardBody>
              </Card>
            ))}
            <Marquee />
            <ResizeGrip />
          </Canvas>
        </Window>

        <Window>
          <TitleBar>
            <Lights>
              <Light $tone="off" aria-label="Close" />
              <Light $tone="off" aria-label="Minimize" />
              <Light $tone="off" aria-label="Zoom" />
            </Lights>
            <Title>Inspector</Title>
          </TitleBar>
          <Panes>
            {notes.map((note, i) => (
              <React.Fragment key={note.heading}>
                {i > 0 && (
                  <Splitter>
                    <svg width="6" height="4" viewBox="0 0 6 4" aria-hidden="true">
                      <path d="M.5 3.500C1 1 3 .5 5 1.500" fill="none" stroke="#777" strokeWidth="1.200" />
                    </svg>
                  </Splitter>
                )}
                <NotePane note={note} />
              </React.Fragment>
            ))}
            <ResizeGrip />
          </Panes>
        </Window>

        <Margin>
          <DesktopLabel>og</DesktopLabel>
        </Margin>

        <Dock>
          {dockApps.map(([label, running, icon]) => (
            <DockItem key={label} label={label} running={running}>{icon}</DockItem>
          ))}
          <DockSeparator>
            {[0, 1, 2, 3, 4, 5].map((n) => <Tick key={n} />)}
          </DockSeparator>
          {dockStacks.map(([label, icon]) => (
            <DockItem key={label} label={label}>{icon}</DockItem>
          ))}
        </Dock>
      </Desktop>
    </Screen>
  );
}
